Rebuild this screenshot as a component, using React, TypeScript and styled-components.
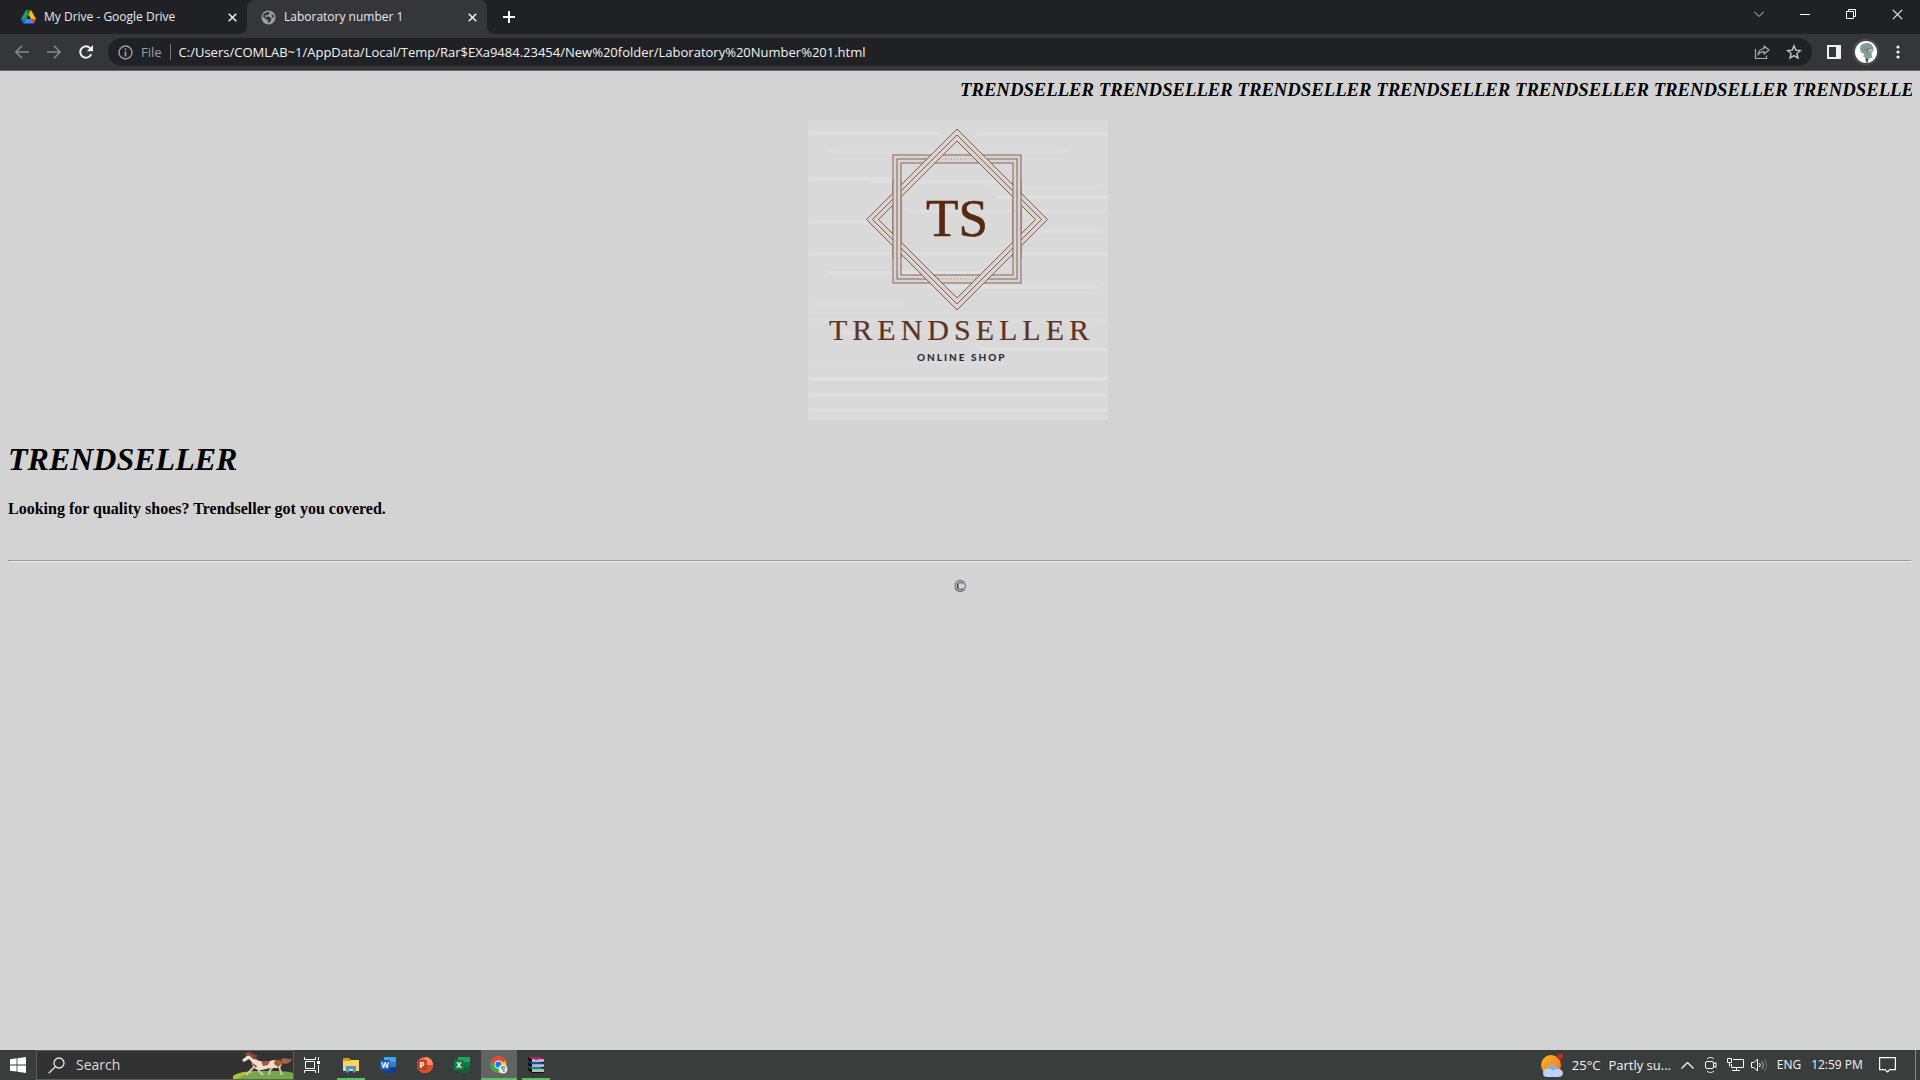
import React from 'react';
import styled, { createGlobalStyle, css } from 'styled-components';

const ui = '"Open Sans", "Noto Sans", sans-serif';
const serif = '"Liberation Serif", "Times New Roman", serif';

const GlobalStyle = createGlobalStyle`
  * { box-sizing: border-box; }
  body { margin: 0; background: #d3d3d3; }
  button { border: 0; padding: 0; background: none; color: inherit; font: inherit; }
  svg { display: block; flex: none; }
`;

const Screen = styled.div`
  display: flex;
  flex-direction: column;
  min-height: 100vh;
`;

const TabStrip = styled.header`
  display: flex;
  height: 34px;
  padding-left: 7px;
  background: #202124;
  color: #e8eaed;
  font: 12px/16px ${ui};
`;

const Tab = styled.div<{ $active?: boolean }>`
  display: flex;
  align-items: center;
  gap: 8px;
  width: 240px;
  padding: 0 7px 0 14px;
  ${(p) =>
    p.$active &&
    css`
      position: relative;
      background: #35363a;
      border-radius: 8px 8px 0 0;
      &::before,
      &::after {
        content: '';
        position: absolute;
        bottom: 0;
        width: 8px;
        height: 8px;
      }
      &::before {
        left: -8px;
        background: radial-gradient(circle at 0 0, transparent 8px, #35363a 8px);
      }
      &::after {
        right: -8px;
        background: radial-gradient(circle at 100% 0, transparent 8px, #35363a 8px);
      }
    `}
`;

const TabTitle = styled.span`
  flex: 1;
  white-space: nowrap;
`;

const IconButton = styled.button<{ $w: number; $h?: number; $color?: string }>`
  display: flex;
  align-items: center;
  justify-content: center;
  flex: none;
  width: ${(p) => p.$w}px;
  height: ${(p) => p.$h ?? 28}px;
  color: ${(p) => p.$color ?? 'inherit'};
`;

const NewTab = styled(IconButton)`
  margin-left: 8px;
`;

const WindowControls = styled.div`
  display: flex;
  margin-left: auto;
`;

const Toolbar = styled.div`
  display: flex;
  align-items: center;
  height: 37px;
  padding: 0 8px;
  background: #35363a;
  border-bottom: 1px solid #69646e;
  color: #f1f3f4;
`;

const ButtonGroup = styled.div`
  display: flex;
  gap: 4px;
`;

const Omnibox = styled.div`
  display: flex;
  align-items: center;
  flex: 1;
  height: 28px;
  margin: 0 8px;
  padding: 0 4px 0 10px;
  border-radius: 14px;
  background: #202124;
  color: #9aa0a6;
  font: 13px/18px ${ui};
`;

const Scheme = styled.label`
  margin-left: 8px;
  padding-right: 8px;
  line-height: 16px;
  border-right: 1px solid #74777b;
`;

const Address = styled.input`
  flex: 1;
  min-width: 0;
  margin-left: 8px;
  padding: 0;
  border: 0;
  outline: 0;
  background: none;
  color: #f1f3f4;
  font: 13px/18px ${ui};
`;

const Page = styled.main`
  flex: 1;
  padding: 8px;
  background: #d3d3d3;
  color: #000;
  font: 16px/normal ${serif};
`;

const Ticker = styled.div`
  margin-left: 50%;
  overflow: hidden;
  white-space: nowrap;
  h3 {
    margin: 0;
    font-style: italic;
  }
`;

const Logo = styled.div`
  display: flex;
  justify-content: center;
  margin-top: 19px;
  padding-right: 4px;
`;

const Heading = styled.h1`
  margin: 21px 0 22px;
  font-size: 32px;
  font-style: italic;
`;

const Tagline = styled.h4`
  margin: 21px 0 42px;
  font-size: 16px;
`;

const Rule = styled.hr`
  margin: 0 0 16px;
  border: 1px solid;
  border-color: #9a9a9a #eeeeee #eeeeee #9a9a9a;
`;

const Copyright = styled.footer`
  text-align: center;
`;

const Taskbar = styled.footer`
  display: flex;
  height: 30px;
  background: #393d3c;
  color: #f5f5f5;
  font: 12px/16px ${ui};
`;

const SearchBox = styled.label`
  display: flex;
  align-items: center;
  width: 258px;
  padding-left: 11px;
  border: 1px solid #5c5e5e;
  background: #323232;
`;

const SearchField = styled.input`
  flex: 1;
  min-width: 0;
  margin-left: 11px;
  padding: 0;
  border: 0;
  outline: 0;
  background: none;
  font: 14px/20px ${ui};
  &::placeholder {
    color: #dcdcdc;
    opacity: 1;
  }
`;

const Apps = styled.nav`
  display: flex;
  gap: 1px;
  margin-left: 3px;
`;

const AppButton = styled(IconButton)<{ $state?: 'open' | 'active' }>`
  background: ${(p) =>
    p.$state === 'active'
      ? 'linear-gradient(#5fbf62, #5fbf62) bottom / 100% 2px no-repeat, #616463'
      : p.$state === 'open'
        ? 'linear-gradient(#5fbf62, #5fbf62) bottom / 28px 2px no-repeat'
        : 'none'};
`;

const Tray = styled.div`
  display: flex;
  align-items: center;
  margin-left: auto;
`;

const Weather = styled.button`
  display: flex;
  align-items: center;
  gap: 8px;
  margin-right: 4px;
  font: 13px/20px ${ui};
  white-space: nowrap;
`;

const TrayText = styled.button<{ $w: number }>`
  width: ${(p) => p.$w}px;
  font: 12px/16px ${ui};
  text-align: center;
  white-space: nowrap;
`;

const ShowDesktop = styled.button`
  width: 5px;
  height: 30px;
  margin-left: 8px;
  border-left: 1px solid #8a8d8c;
`;

const DriveIcon = () => (
  <svg width="15" height="14" viewBox="0 0 15 14">
    <path d="M5 0h5l5 9h-5z" fill="#fbbc04" />
    <path d="M5 0 0 9l2.500 4.500L7.500 4.500z" fill="#1ea362" />
    <path d="M5 9h10l-2.500 4.500h-10z" fill="#4285f4" />
    <path d="M5 0h5L7.500 4.500z" fill="#188038" />
    <path d="M10 9h5l-2.500 4.500z" fill="#ea4335" />
    <path d="M0 9h5l-2.500 4.500z" fill="#1967d2" />
  </svg>
);

const GlobeIcon = () => (
  <svg width="15" height="15" viewBox="0 0 15 15">
    <circle cx="7.500" cy="7.500" r="7" fill="#9aa0a6" />
    <path d="M5.500 2.200 8.500 1.800 8 4.200 6 5.200 6.200 6.600 9 7 10.500 8.600 9.800 11 7.400 13.200 7 10.400 4.600 8.800 1.600 6.200 3 3.700z" fill="#35363a" />
    <path d="M10.500 3.400 12.600 5.600 13 8 11 7z" fill="#35363a" />
    <path d="M3.600 5.600 6 5.200 6.200 6.600 4.800 7.600z" fill="#9aa0a6" />
  </svg>
);

const CrossIcon = ({ size = 9, w = 1.6 }: { size?: number; w?: number }) => (
  <svg width={size} height={size} viewBox="0 0 9 9" stroke="currentColor" strokeWidth={w} fill="none">
    <path d="M.7.7l7.600 7.600M8.300.7.7 8.300" />
  </svg>
);

const ShareIcon = () => (
  <svg width="16" height="16" viewBox="0 0 16 16" fill="none" stroke="#a9adb1" strokeWidth="1.200">
    <path d="M1.500 5v9.500h11V11.500" />
    <path d="M10 2l5 4-5 4V7.700C7 7.700 5.300 8.800 4 11c.3-3.700 2.500-6 6-6.500z" strokeLinejoin="round" />
  </svg>
);

const StarIcon = () => (
  <svg width="16" height="16" viewBox="0 0 16 16" fill="none" stroke="#c4c7ca" strokeWidth="1.400">
    <path d="M8 1.800l1.800 4.300 4.600.4-3.500 3 1.100 4.600L8 11.600l-4 2.500 1.100-4.600-3.500-3 4.600-.4z" />
  </svg>
);

const Avatar = () => (
  <svg width="28" height="28" viewBox="0 0 28 28">
    <circle cx="14" cy="14" r="13.500" fill="#47494c" />
    <circle cx="14" cy="14" r="11" fill="#fff" />
    <path d="M8 11c0-4 3-6 7-6s6.500 2.500 6.500 6c0 2-1 3-2 3.500l.5 5.500h-2.500l-1 2h-3l-.5-3-2-.5 1.500-2.500C10 15.500 8 14 8 11z" fill="#7f9f97" />
    <path d="M12 10.500h8v3h-4.500z" fill="#c5b39c" />
    <path d="M12 11.500l7-1" stroke="#586f5f" strokeWidth="1" />
    <path d="M15.500 11v4" stroke="#a9483f" />
    <path d="M13.500 20.500h2.500v4h-2z" fill="#72501f" />
  </svg>
);

const stripes: [number, number, number, number][] = [
  [12, 0, 130, 0.6], [13, 170, 130, 0.5], [30, 20, 240, 0.3], [58, 0, 90, 0.65], [61, 60, 140, 0.4],
  [66, 180, 110, 0.4], [76, 190, 110, 0.65], [90, 100, 200, 0.4], [101, 0, 60, 0.4], [110, 215, 80, 0.4],
  [133, 0, 300, 0.45], [152, 20, 160, 0.6], [166, 120, 170, 0.6], [183, 0, 90, 0.45], [200, 0, 300, 0.3],
  [212, 30, 150, 0.4], [228, 170, 130, 0.55], [242, 0, 200, 0.3], [258, 0, 300, 0.7], [274, 0, 300, 0.6],
  [289, 0, 300, 0.5], [297, 0, 300, 0.3],
];

const SquareRing = () => (
  <g fill="none">
    <rect x="89" y="39" width="120" height="120" stroke="#dcd3ce" strokeWidth="8" />
    <g stroke="#7d6860" strokeWidth="1">
      <rect x="85" y="35" width="128" height="128" />
      <rect x="89" y="39" width="120" height="120" />
      <rect x="93" y="43" width="112" height="112" />
    </g>
  </g>
);

const TrendsellerLogo = () => (
  <svg width="300" height="300" viewBox="0 0 300 300" role="img" aria-label="Trendseller online shop">
    <defs>
      <clipPath id="sides">
        <rect x="60" y="60" width="180" height="78" />
      </clipPath>
      <filter id="soft" x="-5%" y="-5%" width="110%" height="110%">
        <feGaussianBlur stdDeviation="3 0.8" />
      </filter>
    </defs>
    <rect width="300" height="300" fill="#d9d9da" />
    <g filter="url(#soft)">
      {stripes.map(([y, x, w, o]) => (
        <rect key={y} x={x} y={y} width={w} height="2" fill="#eeeeee" opacity={o} />
      ))}
    </g>
    <SquareRing />
    <path d="M131 39h36M131 159h36" stroke="#dcd3ce" strokeWidth="3" />
    <path d="M131 39h36M131 159h36" stroke="#a48f84" strokeWidth="1" strokeDasharray="1 2" />
    <g fill="none">
      <path d="M149 15l84.500 84.500L149 184 64.500 99.500z" stroke="#dcd3ce" strokeWidth="8" />
      <g stroke="#7a5f55" strokeWidth="1">
        <path d="M149 9l90.500 90.500L149 190 58.500 99.500z" />
        <path d="M149 15l84.500 84.500L149 184 64.500 99.500z" />
        <path d="M149 21l78.500 78.500L149 178 70.500 99.500z" />
      </g>
    </g>
    <g clipPath="url(#sides)">
      <SquareRing />
    </g>
    <text x="149" y="116" textAnchor="middle" fontFamily={serif} fontSize="53" fill="#57290f" stroke="#57290f" strokeWidth=".6">TS</text>
    <text x="21" y="220" fontFamily={serif} fontSize="30" letterSpacing="5" fill="#5d3424" stroke="#5d3424" strokeWidth=".2">TRENDSELLER</text>
    <text x="109" y="241" fontFamily="Lato, sans-serif" fontWeight="900" fontSize="10" letterSpacing="2" fill="#2e2e33">ONLINE SHOP</text>
  </svg>
);

const Horse = () => (
  <svg width="60" height="28" viewBox="0 0 60 28">
    <path d="M0 28v-3C6 21 16 20 30 20s24 0 30 2v6z" fill="#74a64a" />
    <path d="M0 28v-3C6 21 14 20.500 24 20.500 14 23 8 25 5 28z" fill="#a8c23c" />
    <path d="M48 9c3-4 6 1 11-2-1 5-6 7-10 5z" fill="#a5604a" />
    <g fill="none" stroke="#d9c3ac" strokeWidth="2" strokeLinejoin="round">
      <path d="M22 15l-5 5-4 4M25 16l1 4 4 4M42 14l-5 5-1 5M46 14l1 5 2 5" />
    </g>
    <path d="M9 9l6-5 4 1c2 3 4 4 8 5h10c5-2 10-1 12 2 0 4-3 5-7 5-5-1-9 2-14 2-6 0-9-3-9-8l-3-3-5 3z" fill="#efe1d2" />
    <path d="M28 10h9l-2 4-5 1zM42 9c4-1 7 1 7 4l-4 3-4-3zM20 12l4 3-1 2-3-3z" fill="#a45a32" />
    <path d="M11 3c4-3 7-2 9 0l6 2-4 1 4 3-6-1-3-3z" fill="#8d4432" />
  </svg>
);

const OfficeIcon = ({ letter, tones, round }: { letter: string; tones: string[]; round?: boolean }) => (
  <svg width="16" height="16" viewBox="0 0 16 16">
    {round ? (
      <>
        <circle cx="8" cy="8" r="8" fill={tones[0]} />
        <path d="M8 0a8 8 0 0 1 8 8H8z" fill={tones[1]} />
        <path d="M0 8h16a8 8 0 0 1-16 0z" fill={tones[2]} />
      </>
    ) : (
      <>
        <path d="M4 0h12v5H4z" fill={tones[0]} />
        <path d="M4 5h12v5H4z" fill={tones[1]} />
        <path d="M4 10h12v6H4z" fill={tones[2]} />
      </>
    )}
    <rect y="3" width="10" height="10" rx="1" fill={tones[3]} />
    <text x="5" y="11" textAnchor="middle" fontFamily={ui} fontWeight="700" fontSize="8" fill="#fff">{letter}</text>
  </svg>
);

const ChromeIcon = () => (
  <svg width="18" height="18" viewBox="0 0 18 18">
    <circle cx="8.500" cy="8.500" r="8" fill="#fbbc04" />
    <path d="M8.500 8.500 1.500 4.500A8 8 0 0 1 15.500 4.500z" fill="#ea4335" />
    <path d="M8.500 8.500 1.500 4.500A8 8 0 0 0 8 16.500l3-5z" fill="#34a853" />
    <path d="M1.500 4.500 5 10.500l3.500-6z" fill="#ea4335" />
    <circle cx="8.500" cy="8.500" r="4" fill="#fff" />
    <circle cx="8.500" cy="8.500" r="3.100" fill="#1a73e8" />
    <circle cx="13" cy="13" r="4.500" fill="#e8ecea" />
    <path d="M10.500 12c0-3 5-3 5 0l-1 1.500.5 2.500h-2l-.5-2z" fill="#8ba8a1" />
  </svg>
);

const books: [number, string, string][] = [[0, '#b0207c', '#f08cc8'], [5, '#2448a8', '#5cb4e8'], [10, '#138a70', '#58d0b0']];

const WinrarIcon = () => (
  <svg width="16" height="16" viewBox="0 0 16 16">
    {books.map(([y, c, h]) => (
      <g key={y}>
        <path d={`M0 ${y}h12l4 2v4H4L0 ${y + 3}z`} fill="#111" />
        <path d={`M0 ${y}h12l4 2H4z`} fill={c} />
        <path d={`M4 ${y + 2.5}h12`} stroke={h} />
        <path d={`M4 ${y + 4}h12`} stroke="#f0f0f0" strokeWidth="1.500" />
      </g>
    ))}
    <path d="M7 0h3v3H7z" fill="#7a5a1c" />
  </svg>
);

const ticker = Array(7).fill('TRENDSELLER').join(' ');

export default function App() {
  return (
    <Screen>
      <GlobalStyle />
      <TabStrip>
        <Tab>
          <DriveIcon />
          <TabTitle>My Drive - Google Drive</TabTitle>
          <IconButton $w={16} $h={16} aria-label="Close tab"><CrossIcon /></IconButton>
        </Tab>
        <Tab $active>
          <GlobeIcon />
          <TabTitle>Laboratory number 1</TabTitle>
          <IconButton $w={16} $h={16} aria-label="Close tab"><CrossIcon /></IconButton>
        </Tab>
        <NewTab $w={28} $h={34} aria-label="New tab">
          <svg width="12" height="12" viewBox="0 0 12 12" stroke="#fff" strokeWidth="2"><path d="M6 0v12M0 6h12" /></svg>
        </NewTab>
        <WindowControls>
          <IconButton $w={46} aria-label="Search tabs">
            <svg width="10" height="6" viewBox="0 0 10 6" stroke="#c8cacd" fill="none"><path d="M0 .5l5 5 5-5" /></svg>
          </IconButton>
          <IconButton $w={46} aria-label="Minimize">
            <svg width="10" height="1" viewBox="0 0 10 1"><path d="M0 0h10v1H0z" fill="#fff" /></svg>
          </IconButton>
          <IconButton $w={46} aria-label="Restore">
            <svg width="10" height="10" viewBox="0 0 10 10" stroke="#fff" fill="none"><path d="M.5 2.500h7v7h-7zM2.500 2.500v-2h7v7h-2" /></svg>
          </IconButton>
          <IconButton $w={46} aria-label="Close"><CrossIcon size={11} w={1} /></IconButton>
        </WindowControls>
      </TabStrip>

      <Toolbar>
        <ButtonGroup>
          <IconButton $w={28} $color="#85888b" aria-label="Back">
            <svg width="14" height="14" viewBox="0 0 14 14" stroke="currentColor" strokeWidth="1.600" fill="none"><path d="M7 .7.9 7 7 13.300M1 7h13" /></svg>
          </IconButton>
          <IconButton $w={28} $color="#85888b" aria-label="Forward">
            <svg width="14" height="14" viewBox="0 0 14 14" stroke="currentColor" strokeWidth="1.600" fill="none"><path d="M7 .7 13.100 7 7 13.300M13 7H0" /></svg>
          </IconButton>
          <IconButton $w={28} aria-label="Reload">
            <svg width="14" height="14" viewBox="0 0 14 14"><path d="M12.200 9.200A5.700 5.700 0 1 1 11.200 3.200L12 4" stroke="currentColor" strokeWidth="2" fill="none" /><path d="M14 0v6.200H7.800z" fill="currentColor" /></svg>
          </IconButton>
        </ButtonGroup>
        <Omnibox>
          <svg width="15" height="15" viewBox="0 0 15 15" fill="none" stroke="#9aa0a6" strokeWidth="1.400">
            <circle cx="7.500" cy="7.500" r="6.500" /><path d="M7.500 6.500v5M7.500 3.500v1.700" strokeWidth="1.700" />
          </svg>
          <Scheme htmlFor="address">File</Scheme>
          <Address id="address" readOnly value="C:/Users/COMLAB~1/AppData/Local/Temp/Rar$EXa9484.23454/New%20folder/Laboratory%20Number%201.html" />
          <ButtonGroup>
            <IconButton $w={28} aria-label="Share"><ShareIcon /></IconButton>
            <IconButton $w={28} aria-label="Bookmark"><StarIcon /></IconButton>
          </ButtonGroup>
        </Omnibox>
        <ButtonGroup>
          <IconButton $w={28} aria-label="Side panel">
            <svg width="14" height="14" viewBox="0 0 14 14"><path d="M0 0h14v14H0zM2 2v10h7V2z" fill="currentColor" fillRule="evenodd" /></svg>
          </IconButton>
          <IconButton $w={28} aria-label="Profile"><Avatar /></IconButton>
          <IconButton $w={28} aria-label="Menu">
            <svg width="4" height="14" viewBox="0 0 4 14" fill="currentColor"><circle cx="2" cy="2" r="1.600" /><circle cx="2" cy="7" r="1.600" /><circle cx="2" cy="12" r="1.600" /></svg>
          </IconButton>
        </ButtonGroup>
      </Toolbar>

      <Page>
        <Ticker><h3>{ticker}</h3></Ticker>
        <Logo><TrendsellerLogo /></Logo>
        <Heading>TRENDSELLER</Heading>
        <Tagline>Looking for quality shoes? Trendseller got you covered.</Tagline>
        <Rule />
        <Copyright>©</Copyright>
      </Page>

      <Taskbar>
        <IconButton $w={36} $h={30} aria-label="Start">
          <svg width="16" height="16" viewBox="0 0 16 16" fill="#fff"><path d="M0 2.200 6.600 1.300v6.200H0zM7.400 1.200 16 0v7.500H7.400zM0 8.400h6.600v6.200L0 13.700zM7.400 8.400H16V16l-8.600-1.200z" /></svg>
        </IconButton>
        <SearchBox>
          <svg width="17" height="17" viewBox="0 0 17 17" fill="none" stroke="#e8e8e8" strokeWidth="1.300"><circle cx="11" cy="6" r="5" /><path d="M7.400 9.600.7 16.300" /></svg>
          <SearchField type="text" placeholder="Search" aria-label="Search" />
          <Horse />
        </SearchBox>
        <IconButton $w={36} $h={30} aria-label="Task view">
          <svg width="17" height="16" viewBox="0 0 17 16" fill="none" stroke="#fff"><path d="M.5 0v2.500h11V0M.5 16v-2.500h11V16M1.500 4.500h9v7h-9zM14.500 0v3M14.500 8v8" /><path d="M13 4h3v3h-3z" fill="#fff" stroke="none" /></svg>
        </IconButton>
        <Apps>
          <AppButton $w={36} $h={30} $state="open" aria-label="File Explorer">
            <svg width="16" height="15" viewBox="0 0 16 15"><path d="M0 0h6l2 2v3H0z" fill="#d99a17" /><path d="M0 3h7l1-1h8v11H0z" fill="#fcd462" /><path d="M3 8h10v6.500h-3V11H6v3.500H3z" fill="#3f95dc" /></svg>
          </AppButton>
          <AppButton $w={36} $h={30} aria-label="Word"><OfficeIcon letter="W" tones={['#41a5ee', '#2b7cd3', '#103f91', '#185abd']} /></AppButton>
          <AppButton $w={36} $h={30} aria-label="PowerPoint"><OfficeIcon round letter="P" tones={['#ed6c47', '#ff8f6b', '#d35230', '#c43e1c']} /></AppButton>
          <AppButton $w={36} $h={30} aria-label="Excel"><OfficeIcon letter="X" tones={['#21a366', '#107c41', '#185c37', '#107c41']} /></AppButton>
          <AppButton $w={36} $h={30} $state="active" aria-label="Chrome"><ChromeIcon /></AppButton>
          <AppButton $w={36} $h={30} $state="open" aria-label="WinRAR"><WinrarIcon /></AppButton>
        </Apps>
        <Tray>
          <Weather>
            <svg width="23" height="24" viewBox="0 0 23 24">
              <defs><linearGradient id="sun" x1="0" y1="0" x2="1" y2="1"><stop offset="0" stopColor="#f8b62c" /><stop offset="1" stopColor="#f0701c" /></linearGradient></defs>
              <circle cx="10" cy="12" r="10" fill="url(#sun)" />
              <circle cx="19" cy="3.500" r="3" fill="#c42b1c" />
              <path d="M6 24a4 4 0 0 1 0-8c1-5 9-5 10 0 7-1 8 8 2 8z" fill="#bcd3f6" />
              <path d="M6 16c1-5 9-5 10 0-2 0-3 1-4 2-1-2-4-3-6-2z" fill="#86acec" />
            </svg>
            <span>25°C</span>
            <span>Partly su...</span>
          </Weather>
          <IconButton $w={24} aria-label="Show hidden icons">
            <svg width="13" height="7" viewBox="0 0 13 7" fill="none" stroke="#fff" strokeWidth="1.300"><path d="M.5 6.500l6-6 6 6" /></svg>
          </IconButton>
          <IconButton $w={24} aria-label="Camera">
            <svg width="12" height="16" viewBox="0 0 12 16" fill="none" stroke="#fff"><rect x=".5" y="4.500" width="8" height="7" rx="1.500" /><path d="M8.500 7l2.500-1.500v5L8.500 9M2 2c2-2 5-2 7 0M2 14c2 2 5 2 7 0" /></svg>
          </IconButton>
          <IconButton $w={24} aria-label="Network">
            <svg width="17" height="14" viewBox="0 0 17 14" fill="none" stroke="#fff"><path d="M6 1.500h10.500v8H4.500V6M5 12.500h8M9.500 9.500v3M.5.5h4v4h-4zM2.500 4.500v4" /></svg>
          </IconButton>
          <IconButton $w={24} aria-label="Volume">
            <svg width="17" height="14" viewBox="0 0 17 14" fill="none" stroke="#fff"><path d="M.5 4.500h2.500L6.500 1v12L3 9.500H.5zM8.500 5q1.500 2 0 4" /><path d="M11 3q3 4 0 8" stroke="#aaa" /><path d="M13.500 1q4 6 0 12" stroke="#777" /></svg>
          </IconButton>
          <TrayText $w={36}>ENG</TrayText>
          <TrayText $w={60}>12:59 PM</TrayText>
          <IconButton $w={40} aria-label="Notifications">
            <svg width="17" height="16" viewBox="0 0 17 16" fill="none" stroke="#fff" strokeWidth="1.200"><path d="M.6.6h15.800v12h-5.400L8.500 15 6 12.600H.6z" /></svg>
          </IconButton>
          <ShowDesktop aria-label="Show desktop" />
        </Tray>
      </Taskbar>
    </Screen>
  );
}
